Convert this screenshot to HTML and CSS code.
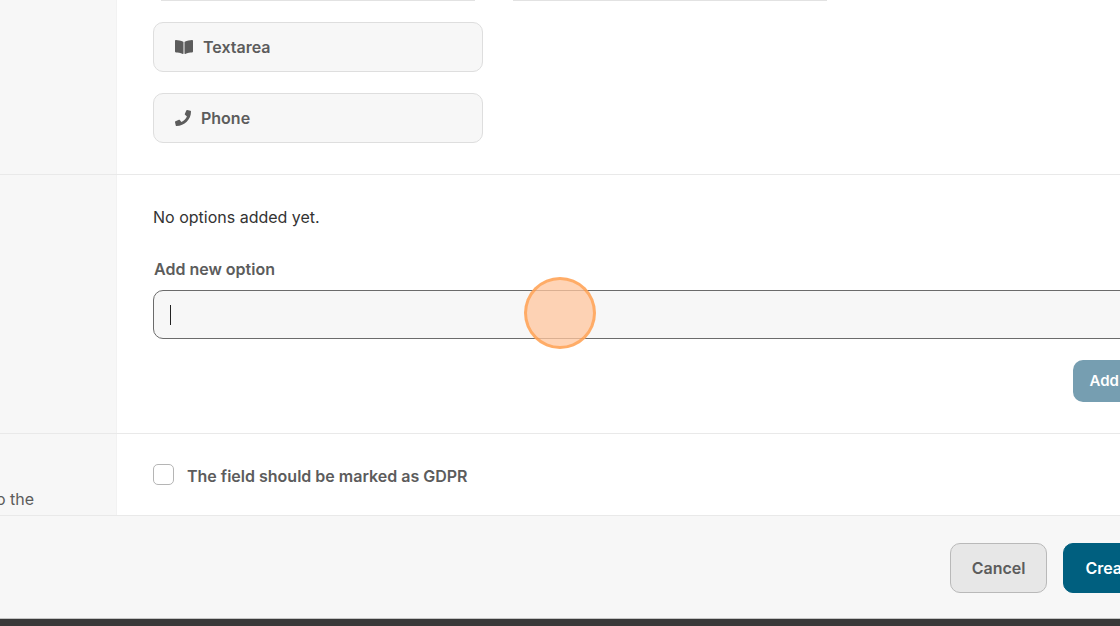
FILE: index.html
```html
<!DOCTYPE html>
<html lang="en">
<head>
<meta charset="utf-8">
<title>Create field</title>
<link rel="stylesheet" href="styles.css">
</head>
<body>
<div class="app">
  <main class="sections">
    <section class="row">
      <div class="hint"></div>
      <div class="content types">
        <div class="type-stub"></div>
        <div class="type-stub"></div>
        <button class="type" type="button">
          <svg class="icon-book" viewBox="0 0 576 512" aria-hidden="true"><path d="M542.2 32.1c-54.8 3.100-163.700 14.400-231 55.600-4.600 2.800-7.300 7.900-7.300 13.200v363.900c0 11.600 12.600 18.900 23.300 13.500 69.200-34.800 169.200-44.300 218.700-46.900 16.900-.9 30-14.400 30-30.700V62.800c0-17.700-15.400-31.800-33.700-30.700zM264.700 87.600C197.500 46.400 88.600 35.100 33.800 32 15.500 31 0 45 0 62.800V400.600c0 16.200 13.100 29.800 30 30.700 49.500 2.600 149.600 12.100 218.800 47 10.600 5.300 23.200-2 23.200-13.600V100.600c0-5.300-2.600-10.100-7.300-13z"/></svg>
          <span>Textarea</span>
        </button>
        <div></div>
        <button class="type" type="button">
          <svg class="icon-phone" viewBox="0 0 512 512" aria-hidden="true"><path d="M493.400 24.600l-104-24c-11.300-2.600-22.900 3.300-27.500 13.900l-48 112c-4.200 9.800-1.400 21.300 6.900 28l60.600 49.600c-36 76.700-98.900 140.500-177.200 177.200l-49.600-60.600c-6.800-8.300-18.200-11.100-28-6.900l-112 48C3.900 366.500-2 378.100.6 389.400l24 104C27.100 504.200 36.700 512 48 512c256.100 0 464-207.500 464-464 0-11.200-7.700-20.900-18.600-23.400z"/></svg>
          <span>Phone</span>
        </button>
      </div>
    </section>
    <section class="row">
      <div class="hint"></div>
      <div class="content options">
        <p class="empty">No options added yet.</p>
        <label class="label" for="option">Add new option</label>
        <div class="field">
          <input class="input" id="option" type="text">
          <span class="caret"></span>
          <span class="pointer"></span>
        </div>
        <button class="add" type="button">Add</button>
      </div>
    </section>
    <section class="row">
      <div class="hint"><p class="hint-text">to the</p></div>
      <div class="content gdpr">
        <input class="check" id="gdpr" type="checkbox">
        <label for="gdpr">The field should be marked as GDPR</label>
      </div>
    </section>
  </main>
  <footer class="footer">
    <button class="cancel" type="button">Cancel</button>
    <button class="create" type="button">Create</button>
  </footer>
  <div class="base"></div>
</div>
</body>
</html>
```

FILE: styles.css
```css
* {
  box-sizing: border-box;
}

body {
  margin: 0;
  overflow: hidden;
  background: #fff;
  color: #5c5c5c;
  font: 16px/24px Inter, "Liberation Sans", sans-serif;
}

button {
  font: inherit;
  font-weight: 600;
}

/* The panel runs past the right edge of the window. */
.app {
  display: flex;
  flex-direction: column;
  width: calc(100% + 56px);
  min-height: 100vh;
}

.row {
  display: grid;
  grid-template-columns: 117px 1fr;
  border-bottom: 1px solid #e9e9e9;
}

.hint {
  display: flex;
  justify-content: flex-end;
  background: #f7f7f7;
  border-right: 1px solid #f2f2f2;
}

.hint-text {
  margin: 0;
  padding: 53px 82px 4px 0;
  white-space: nowrap;
}

.content {
  padding: 30px 40px 31px 36px;
}

.types {
  display: grid;
  grid-template-columns: 330px 330px;
  column-gap: 22px;
  row-gap: 21px;
  padding-top: 0;
}

.type-stub {
  height: 1px;
  margin: 0 8px;
  background: #e2e2e2;
}

.type {
  display: flex;
  align-items: center;
  gap: 10px;
  height: 50px;
  padding: 0 21px;
  border: 1px solid #dedede;
  border-radius: 10px;
  background: #f7f7f7;
  color: #5c5c5c;
}

.type svg {
  fill: #5c5c5c;
}

.icon-book {
  width: 18px;
  height: 16px;
}

.icon-phone {
  width: 16px;
  height: 16px;
}

.options {
  display: flex;
  flex-direction: column;
}

.empty {
  margin: 0 0 28px;
  color: #333;
}

.label {
  margin: 0 0 9px 1px;
  font-weight: 600;
}

.field {
  position: relative;
  margin-bottom: 21px;
}

.input {
  display: block;
  width: 100%;
  height: 49px;
  padding: 0 16px;
  border: 1px solid #6b6b6b;
  border-radius: 10px;
  outline: none;
  background: #f7f7f7;
  color: #333;
  font: inherit;
}

.caret {
  position: absolute;
  top: 15px;
  left: 17px;
  width: 1px;
  height: 20px;
  background: #222;
}

.pointer {
  position: absolute;
  top: -13px;
  left: 371px;
  width: 72px;
  height: 72px;
  border: 3px solid rgba(255, 145, 50, 0.6);
  border-radius: 50%;
  background: rgba(255, 198, 158, 0.75);
}

.add {
  align-self: flex-end;
  height: 42px;
  padding: 0 17px;
  border: 0;
  border-radius: 10px;
  background: #769eb1;
  color: #fff;
  font-size: 15px;
}

.gdpr {
  display: flex;
  align-items: flex-start;
  gap: 13px;
  padding-bottom: 0;
  font-weight: 600;
}

.check {
  appearance: none;
  width: 21px;
  height: 21px;
  margin: 0;
  border: 1px solid #b5b5b5;
  border-radius: 5px;
  background: #fff;
}

.footer {
  display: flex;
  flex: 1;
  align-items: center;
  justify-content: flex-end;
  gap: 16px;
  padding: 26px 17px 24px;
  background: #f7f7f7;
}

.cancel,
.create {
  height: 50px;
  padding: 0 21px;
  border: 1px solid #b9b9b9;
  border-radius: 10px;
  background: #e7e7e7;
  color: #5c5c5c;
}

.create {
  border-color: #005f7f;
  background: #005f7f;
  color: #fff;
}

.base {
  height: 8px;
  border-top: 1px solid #c4c4c4;
  background: #393939;
}
```
